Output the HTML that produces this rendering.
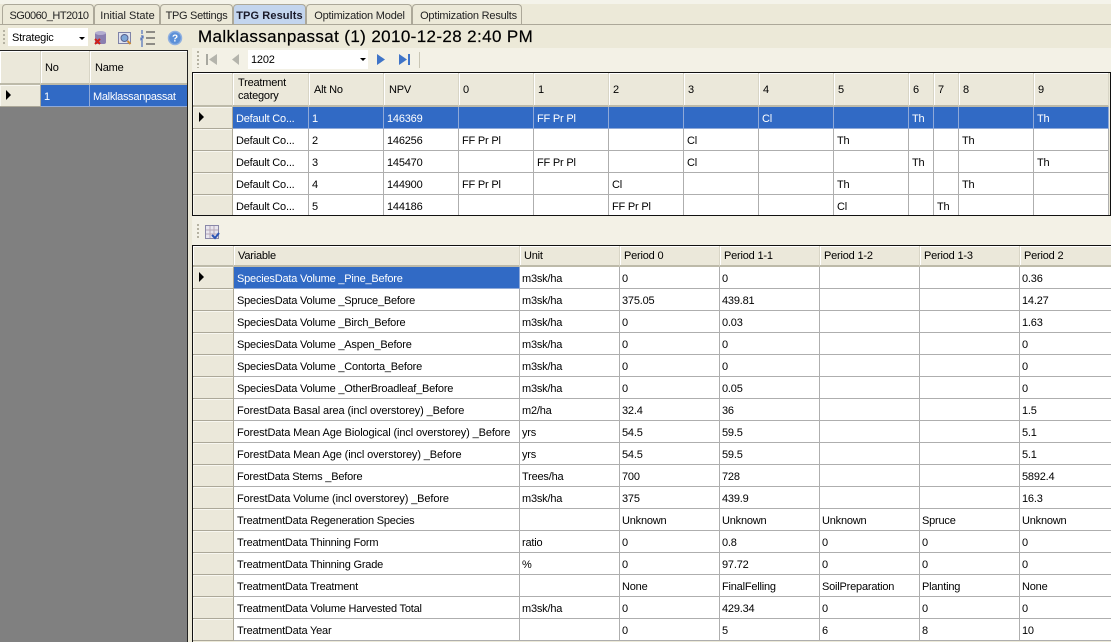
<!DOCTYPE html>
<html><head><meta charset="utf-8"><style>
html,body{margin:0;padding:0;width:1111px;height:642px;overflow:hidden;background:#ece9d8;font:11px "Liberation Sans",sans-serif;color:#000;letter-spacing:-.2px}
.a{position:absolute}
.tab{position:absolute;top:4px;height:20px;line-height:22px;text-align:center;background:#ece9d8;border:1px solid #aca899;border-bottom:none;border-radius:4px 4px 0 0;box-sizing:border-box;white-space:nowrap;color:#222}
table{border-collapse:separate;border-spacing:0;table-layout:fixed;position:absolute}
td,th{box-sizing:border-box;height:22px;padding:2px 0 0 3px;font-weight:normal;text-align:left;white-space:nowrap;overflow:hidden;background:#fff;border-right:1px solid #aeaeae;border-bottom:1px solid #aeaeae;line-height:12px}
th{padding-top:1px;background:#ebe8da;border-right:1px solid #d8d5c6;border-bottom:2px solid #bdbaa9;box-shadow:inset 1px 1px 0 #fff}
td.r{background:#ebe8da;border-right:1px solid #aca899;border-bottom:1px solid #aca899;box-shadow:inset 1px 1px 0 #f8f7f0;padding:0}
tr.s td:not(.r),td.s{background:#316ac5;color:#fff;border-color:#8fa9d8}
.g2 td{padding-left:2px}
.g2 td.f{padding-left:3px}
.arr{width:0;height:0;border-left:5px solid #000;border-top:5px solid transparent;border-bottom:5px solid transparent;position:absolute}
.grip{position:absolute;width:2px;background:repeating-linear-gradient(#b5b2a2 0 2px,transparent 2px 4px)}
</style></head><body>
<div class="a" style="left:0;top:0;width:1111px;height:4px;background:#f4f3ea"></div>
<div class="a" style="left:0;top:24px;width:1111px;height:1px;background:#aca899"></div>
<div class="tab" style="left:2px;width:92px;letter-spacing:-.5px;padding-left:2px">SG0060_HT2010</div>
<div class="tab" style="left:94px;width:66px;letter-spacing:0;padding-left:1px">Initial State</div>
<div class="tab" style="left:160px;width:73px;letter-spacing:-.3px">TPG Settings</div>
<div class="tab" style="left:233px;width:73px;background:#c3d5ee;font-weight:bold;color:#1a1a2a;letter-spacing:.1px">TPG Results</div>
<div class="tab" style="left:306px;width:106px;padding-left:1px">Optimization Model</div>
<div class="tab" style="left:412px;width:110px;padding-left:3px">Optimization Results</div>

<!-- left toolbar -->
<div class="grip" style="left:3px;top:30px;height:15px"></div>
<div class="a" style="left:8px;top:28px;width:80px;height:18px;background:#fff;line-height:20px;padding-left:4px;box-sizing:border-box">Strategic</div>
<div class="a" style="left:79px;top:37px;border-left:3px solid transparent;border-right:3px solid transparent;border-top:3px solid #000"></div>
<svg class="a" style="left:92px;top:29px" width="92" height="18" viewBox="0 0 92 18">
<rect x="3" y="3" width="11" height="12" rx="2" fill="#8a7fb0"/><ellipse cx="8.500" cy="4" rx="5.500" ry="2" fill="#b3add0"/><path d="M3 10l5 5M8 10l-5 5" stroke="#d0201a" stroke-width="2"/>
<rect x="26.500" y="3.500" width="12" height="11" fill="#dfe3ef" stroke="#7f83a8"/><circle cx="32.500" cy="9" r="3.500" fill="#7fa8d8" stroke="#55608f"/><path d="M35.500 12l3 3" stroke="#d08a30" stroke-width="2"/>
<path d="M54 3h9M54 9h9M54 15h9" stroke="#555" stroke-width="1.200"/><path d="M50 1v4M49 7h2v2h-2v2h2M49 13h2M49 15h2M49 17h2" stroke="#2d55b5" fill="none"/>
<circle cx="83" cy="9" r="6.500" fill="#5c90d8" stroke="#8fb0e0" stroke-width="1.500"/><text x="83" y="12.500" font-size="10" font-weight="bold" fill="#fff" text-anchor="middle" font-family="Liberation Sans">?</text>
</svg>

<!-- left grid -->
<div class="a" style="left:0;top:50px;width:188px;height:592px;background:#808080;box-sizing:border-box;border-top:1px solid #222;border-right:1px solid #222"></div>
<table style="left:0;top:51px;width:187px">
<colgroup><col style="width:41px"><col style="width:49px"><col style="width:97px"></colgroup>
<tr><th style="height:34px"></th><th style="height:34px;padding-left:4px">No</th><th style="height:34px;padding-left:5px;border-right:none">Name</th></tr>
<tr class="s"><td class="r" style="position:relative"><span class="arr" style="left:6px;top:5px"></span></td><td style="padding-left:3px">1</td><td style="border-right:none;letter-spacing:-.3px">Malklassanpassat</td></tr>
</table>

<!-- title -->
<div class="a" style="left:198px;top:27px;font-size:17px;line-height:20px;white-space:nowrap;letter-spacing:.38px;-webkit-text-stroke:.2px #000">Malklassanpassat (1) 2010-12-28 2:40 PM</div>

<!-- nav toolbar -->
<div class="a" style="left:192px;top:48px;width:919px;height:24px;background:#f3f1e6"></div>
<div class="grip" style="left:197px;top:51px;height:17px"></div>
<svg class="a" style="left:204px;top:52px" width="216" height="16" viewBox="0 0 216 16">
<rect x="2" y="2" width="2" height="11" fill="#a8a8a0"/><path d="M13 2L5 7.500L13 13z" fill="#b4b4ac"/>
<path d="M35 2L28 7.500L35 13z" fill="#b4b4ac"/>
<path d="M173 2L181 7.500L173 13z" fill="#3f74c8"/>
<path d="M195 2L203 7.500L195 13z" fill="#3f74c8"/><rect x="204" y="2" width="2" height="11" fill="#3f74c8"/>
<rect x="215" y="0" width="1" height="16" fill="#c9c6b5"/>
</svg>
<div class="a" style="left:248px;top:50px;width:120px;height:19px;background:#fff;line-height:20px;padding-left:3px;box-sizing:border-box">1202</div>
<div class="a" style="left:360px;top:58px;border-left:3px solid transparent;border-right:3px solid transparent;border-top:3px solid #000"></div>

<!-- grid 1 -->
<div class="a" style="left:192px;top:72px;width:919px;height:144px;background:#ece9d8;overflow:hidden;box-sizing:border-box;border:1px solid #111">
<table style="left:0;top:0;width:916px;background:#ebe8da">
<colgroup><col style="width:40px"><col style="width:76px"><col style="width:75px"><col style="width:75px"><col style="width:75px"><col style="width:75px"><col style="width:75px"><col style="width:75px"><col style="width:75px"><col style="width:75px"><col style="width:25px"><col style="width:25px"><col style="width:75px"><col style="width:75px"></colgroup>
<tr style="height:34px"><th style="height:34px"></th><th style="height:34px;padding-left:5px;line-height:13px">Treatment<br>category</th><th style="height:34px;padding-left:5px">Alt No</th><th style="height:34px;padding-left:5px">NPV</th><th style="height:34px;padding-left:4px">0</th><th style="height:34px;padding-left:4px">1</th><th style="height:34px;padding-left:4px">2</th><th style="height:34px;padding-left:4px">3</th><th style="height:34px;padding-left:4px">4</th><th style="height:34px;padding-left:4px">5</th><th style="height:34px;padding-left:4px">6</th><th style="height:34px;padding-left:4px">7</th><th style="height:34px;padding-left:4px">8</th><th style="height:34px;padding-left:4px">9</th></tr>
<tr class="s"><td class="r" style="position:relative"><span class="arr" style="left:6px;top:5px"></span></td><td>Default Co...</td><td>1</td><td>146369</td><td></td><td>FF Pr Pl</td><td></td><td></td><td>Cl</td><td></td><td>Th</td><td></td><td></td><td>Th</td></tr>
<tr><td class="r"></td><td>Default Co...</td><td>2</td><td>146256</td><td>FF Pr Pl</td><td></td><td></td><td>Cl</td><td></td><td>Th</td><td></td><td></td><td>Th</td><td></td></tr>
<tr><td class="r"></td><td>Default Co...</td><td>3</td><td>145470</td><td></td><td>FF Pr Pl</td><td></td><td>Cl</td><td></td><td></td><td>Th</td><td></td><td></td><td>Th</td></tr>
<tr><td class="r"></td><td>Default Co...</td><td>4</td><td>144900</td><td>FF Pr Pl</td><td></td><td>Cl</td><td></td><td></td><td>Th</td><td></td><td></td><td>Th</td><td></td></tr>
<tr><td class="r"></td><td>Default Co...</td><td>5</td><td>144186</td><td></td><td></td><td>FF Pr Pl</td><td></td><td></td><td>Cl</td><td></td><td>Th</td><td></td><td></td></tr>
</table>
</div>

<!-- toolbar 2 -->
<div class="a" style="left:192px;top:216px;width:919px;height:29px;background:#f3f1e6"></div>
<div class="grip" style="left:197px;top:224px;height:16px"></div>
<svg class="a" style="left:205px;top:225px" width="15" height="15" viewBox="0 0 15 15">
<rect x=".5" y=".5" width="13" height="13" fill="#e8e6ee" stroke="#8a88a8"/><path d="M5 1v12M9 1v12M1 5h12M1 9h12" stroke="#b8a8b8"/><path d="M7 10l3 3 4-5" stroke="#2d55b5" stroke-width="2" fill="none"/>
</svg>

<!-- grid 2 -->
<div class="a" style="left:192px;top:245px;width:919px;height:397px;overflow:hidden;border-top:1px solid #111;border-left:1px solid #111;box-sizing:border-box;background:#ece9d8">
<table class="g2" style="left:0;top:0;width:927px">
<colgroup><col style="width:41px"><col style="width:286px"><col style="width:100px"><col style="width:100px"><col style="width:100px"><col style="width:100px"><col style="width:100px"><col style="width:100px"></colgroup>
<tr><th style="height:21px;"></th><th style="height:21px;padding-left:4px">Variable</th><th style="height:21px;padding-left:4px">Unit</th><th style="height:21px;padding-left:4px">Period 0</th><th style="height:21px;padding-left:4px">Period 1-1</th><th style="height:21px;padding-left:4px">Period 1-2</th><th style="height:21px;padding-left:4px">Period 1-3</th><th style="height:21px;padding-left:4px">Period 2</th></tr>
<tr><td class="r" style="position:relative"><span class="arr" style="left:6px;top:5px"></span></td><td class="s f">SpeciesData Volume _Pine_Before</td><td>m3sk/ha</td><td>0</td><td>0</td><td></td><td></td><td>0.36</td></tr>
<tr><td class="r"></td><td class="f">SpeciesData Volume _Spruce_Before</td><td>m3sk/ha</td><td>375.05</td><td>439.81</td><td></td><td></td><td>14.27</td></tr>
<tr><td class="r"></td><td class="f">SpeciesData Volume _Birch_Before</td><td>m3sk/ha</td><td>0</td><td>0.03</td><td></td><td></td><td>1.63</td></tr>
<tr><td class="r"></td><td class="f">SpeciesData Volume _Aspen_Before</td><td>m3sk/ha</td><td>0</td><td>0</td><td></td><td></td><td>0</td></tr>
<tr><td class="r"></td><td class="f">SpeciesData Volume _Contorta_Before</td><td>m3sk/ha</td><td>0</td><td>0</td><td></td><td></td><td>0</td></tr>
<tr><td class="r"></td><td class="f">SpeciesData Volume _OtherBroadleaf_Before</td><td>m3sk/ha</td><td>0</td><td>0.05</td><td></td><td></td><td>0</td></tr>
<tr><td class="r"></td><td class="f" style="letter-spacing:-.12px">ForestData Basal area (incl overstorey) _Before</td><td>m2/ha</td><td>32.4</td><td>36</td><td></td><td></td><td>1.5</td></tr>
<tr><td class="r"></td><td class="f" style="letter-spacing:-.12px">ForestData Mean Age Biological (incl overstorey) _Before</td><td>yrs</td><td>54.5</td><td>59.5</td><td></td><td></td><td>5.1</td></tr>
<tr><td class="r"></td><td class="f" style="letter-spacing:-.12px">ForestData Mean Age (incl overstorey) _Before</td><td>yrs</td><td>54.5</td><td>59.5</td><td></td><td></td><td>5.1</td></tr>
<tr><td class="r"></td><td class="f">ForestData Stems _Before</td><td>Trees/ha</td><td>700</td><td>728</td><td></td><td></td><td>5892.4</td></tr>
<tr><td class="r"></td><td class="f" style="letter-spacing:-.12px">ForestData Volume (incl overstorey) _Before</td><td>m3sk/ha</td><td>375</td><td>439.9</td><td></td><td></td><td>16.3</td></tr>
<tr><td class="r"></td><td class="f">TreatmentData Regeneration Species</td><td></td><td>Unknown</td><td>Unknown</td><td>Unknown</td><td>Spruce</td><td>Unknown</td></tr>
<tr><td class="r"></td><td class="f">TreatmentData Thinning Form</td><td>ratio</td><td>0</td><td>0.8</td><td>0</td><td>0</td><td>0</td></tr>
<tr><td class="r"></td><td class="f">TreatmentData Thinning Grade</td><td>%</td><td>0</td><td>97.72</td><td>0</td><td>0</td><td>0</td></tr>
<tr><td class="r"></td><td class="f">TreatmentData Treatment</td><td></td><td>None</td><td>FinalFelling</td><td>SoilPreparation</td><td>Planting</td><td>None</td></tr>
<tr><td class="r"></td><td class="f">TreatmentData Volume Harvested Total</td><td>m3sk/ha</td><td>0</td><td>429.34</td><td>0</td><td>0</td><td>0</td></tr>
<tr><td class="r"></td><td class="f">TreatmentData Year</td><td></td><td>0</td><td>5</td><td>6</td><td>8</td><td>10</td></tr>
</table>
</div>
</body></html>
